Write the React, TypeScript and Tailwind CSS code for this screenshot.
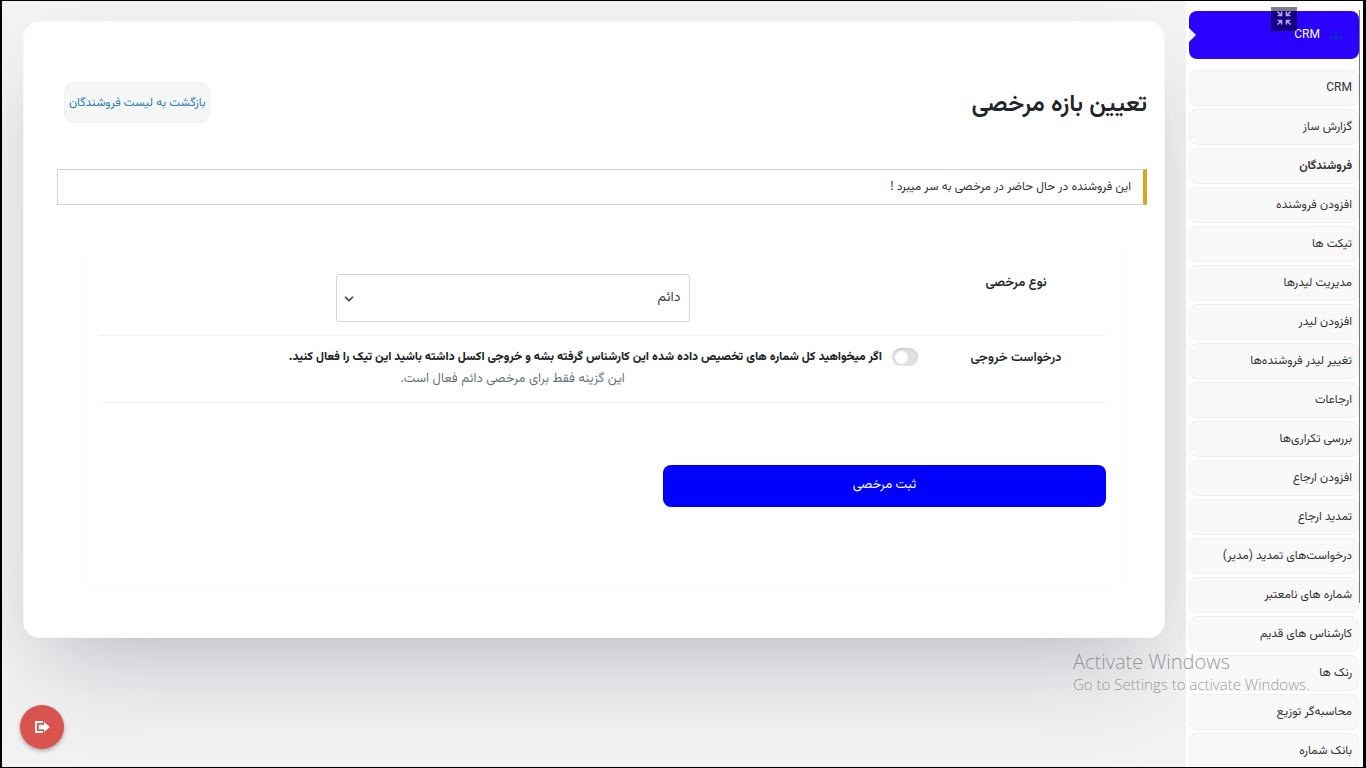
import { useState } from "react";
import { ChevronDown } from "lucide-react";
import clsx from "clsx";

const menuItems = [
  { label: "CRM" },
  { label: "گزارش ساز" },
  { label: "فروشندگان", active: true },
  { label: "افزودن فروشنده" },
  { label: "تیکت ها" },
  { label: "مدیریت لیدرها" },
  { label: "افزودن لیدر" },
  { label: "تغییر لیدر فروشنده‌ها" },
  { label: "ارجاعات" },
  { label: "بررسی تکراری‌ها" },
  { label: "افزودن ارجاع" },
  { label: "تمدید ارجاع" },
  { label: "درخواست‌های تمدید (مدیر)" },
  { label: "شماره های نامعتبر" },
  { label: "کارشناس های قدیم" },
  { label: "رنک ها" },
  { label: "محاسبه‌گر توزیع" },
  { label: "بانک شماره" },
];

function UsersIcon() {
  return (
    <svg width="14" height="14" viewBox="0 0 14 14" fill="currentColor">
      <circle cx="7" cy="5" r="2" />
      <circle cx="4" cy="2" r="1.4" />
      <circle cx="10" cy="2" r="1.4" />
      <circle cx="1.6" cy="4.6" r="1.3" />
      <circle cx="12.4" cy="4.6" r="1.3" />
      <path d="M3.8 8.5Q7 6 10.2 8.5L9.5 13.5h-5zM.3 7.2Q2 5.8 3.4 7.4L3.6 12H1.3zM13.7 7.2Q12 5.8 10.6 7.4l-.2 4.6h2.3z" />
    </svg>
  );
}

function CompressIcon() {
  return (
    <svg width="16" height="16" viewBox="0 0 16 16" fill="none" stroke="currentColor" strokeWidth="1.5">
      <path d="M1.5 1.5 5.2 5.2M1.6 5.6h4V1.6M14.5 1.5l-3.7 3.7M14.4 5.6h-4V1.6M1.5 14.5l3.7-3.7M1.6 10.4h4v4M14.5 14.5l-3.7-3.7M14.4 10.4h-4v4" />
    </svg>
  );
}

function ExitIcon() {
  return (
    <svg width="15" height="12" viewBox="0 0 15 12">
      <path d="M8 1H1v10h7" fill="none" stroke="white" strokeWidth="1.8" />
      <path d="M3.8 3.8h5.2V1L15 6 9 11V8.2H3.8z" fill="white" />
    </svg>
  );
}

function Sidebar() {
  return (
    <aside className="relative w-[177px] shrink-0 overflow-hidden bg-white pt-[10px] pr-1 pl-[3px]">
      <button
        type="button"
        className="relative flex h-12 w-full items-center gap-[9px] rounded-lg bg-[#2a00ff] pr-4 pb-px text-xs text-white"
      >
        <span className="text-[#1f1ae0]">
          <UsersIcon />
        </span>
        CRM
        <span className="absolute top-[17px] left-0 border-y-[7px] border-l-[7px] border-y-transparent border-l-[#f3f3f3]" />
      </button>
      <nav className="mt-[11px] flex flex-col gap-[3px]">
        {menuItems.map((item) => (
          <a
            key={item.label}
            href="#"
            className={clsx(
              "flex h-9 shrink-0 items-center rounded-lg border border-[#f0f0f0] bg-[#f9f9f9] pr-[6px] pb-px text-xs whitespace-nowrap text-[#333]",
              item.active && "font-bold"
            )}
          >
            {item.label}
          </a>
        ))}
      </nav>
      {/* scroll thumb */}
      <div className="absolute top-[9px] right-[3px] h-[593px] w-px bg-[#777]" />
    </aside>
  );
}

function LeaveForm() {
  const [leaveType, setLeaveType] = useState("permanent");
  const [exportRequested, setExportRequested] = useState(false);

  return (
    <form
      className="mt-9 mr-[26px] ml-[27px] rounded-xl border border-t-0 border-[#fafafa] px-[14px] pt-[20px] pb-20 text-[#212529]"
      onSubmit={(e) => e.preventDefault()}
    >
      <div className="flex border-b border-[#f0f0f0] pt-[13px] pb-[13px]">
        <label htmlFor="leaveType" className="w-[180px] shrink-0 text-center text-[13px] leading-[18px] font-semibold">
          نوع مرخصی
        </label>
        <div className="flex flex-1 justify-center">
          <div className="relative w-[354px]">
            <select
              id="leaveType"
              value={leaveType}
              onChange={(e) => setLeaveType(e.target.value)}
              className="h-12 w-full appearance-none rounded-[3px] border border-[#d5d5d5] bg-white pr-2 pl-8 text-sm text-[#444]"
            >
              <option value="permanent">دائم</option>
              <option value="temporary">موقت</option>
            </select>
            <ChevronDown
              size={14}
              strokeWidth={3}
              className="pointer-events-none absolute top-[18px] left-[6px] text-[#444]"
            />
          </div>
        </div>
      </div>

      <div className="flex border-b border-[#f0f0f0] pt-3 pb-[14px]">
        <label
          htmlFor="exportRequest"
          className="w-[180px] shrink-0 text-center text-[13px] leading-5 font-semibold"
        >
          درخواست خروجی
        </label>
        <div className="flex-1 pr-2">
          <label className="flex items-center gap-[10px] text-xs leading-[18px] font-extrabold whitespace-nowrap">
            <input
              type="checkbox"
              id="exportRequest"
              checked={exportRequested}
              onChange={(e) => setExportRequested(e.target.checked)}
              className="h-[18px] w-[26px] shrink-0 appearance-none rounded-full bg-[#dfe0e5] p-[3px] shadow-[inset_0_1px_2px_rgba(0,0,0,0.12)] before:mr-[7px] before:block before:size-[13px] before:rounded-full before:bg-white checked:bg-blue-600 checked:before:mr-0"
            />
            اگر میخواهید کل شماره های تخصیص داده شده این کارشناس گرفته بشه و خروجی اکسل داشته باشید این تیک را فعال کنید.
          </label>
          <p className="mt-1 pl-2 text-center text-[13px] leading-[18px] text-[#6c757d]">
            این گزینه فقط برای مرخصی دائم فعال است.
          </p>
        </div>
      </div>

      <button
        type="submit"
        className="mt-[62px] block h-[42px] w-[44%] rounded-lg bg-[#0000ff] text-[13px] text-white"
      >
        ثبت مرخصی
      </button>
    </form>
  );
}

export default function App() {
  return (
    <div
      dir="rtl"
      className="relative flex h-screen overflow-hidden border-t border-r-[3px] border-b border-l-2 border-black bg-[#f3f3f3] font-['Vazirmatn','Roboto','Noto_Sans',sans-serif]"
    >
      <Sidebar />

      <main className="min-w-0 flex-1 overflow-hidden pt-5 pr-[21px] pl-[21px]">
        <section className="rounded-2xl border border-[#f8f8f8] bg-white pt-[60px] pr-[17px] pb-[49px] pl-[33px] shadow-[0_50px_100px_-20px_rgba(50,50,93,0.2),0_30px_60px_-30px_rgba(0,0,0,0.1)]">
          <header className="flex items-center justify-between pl-[7px]">
            <h1 className="pt-1 text-2xl font-semibold text-[#212529]">تعیین بازه مرخصی</h1>
            <a
              href="#"
              className="flex h-[41px] items-center rounded-[10px] border border-[#eef1f1] bg-[#f5f7f7] px-1 text-xs text-[#337ab7]"
            >
              بازگشت به لیست فروشندگان
            </a>
          </header>

          <div className="mt-[46px] flex h-9 items-center border border-r-4 border-[#d3d3d3] border-r-[#daa520] pr-3 text-xs text-[#333]">
            این فروشنده در حال حاضر در مرخصی به سر میبرد !
          </div>

          <LeaveForm />
        </section>
      </main>

      <button
        type="button"
        aria-label="تمام صفحه"
        className="absolute top-[6px] right-[66px] flex h-6 w-[26px] items-center justify-center bg-black/50 pb-[2px] text-[#b9a5ff]"
      >
        <CompressIcon />
      </button>

      <button
        type="button"
        aria-label="خروج"
        className="absolute bottom-[18px] left-[18px] flex size-11 items-center justify-center rounded-full bg-[#d9534f] shadow-[0_2px_4px_rgba(0,0,0,0.3)]"
      >
        <ExitIcon />
      </button>

      <div
        dir="ltr"
        className="pointer-events-none absolute right-[54px] bottom-[73px] w-[236px] font-['Open_Sans',sans-serif] font-light whitespace-nowrap text-[#808080]/80"
      >
        <p className="text-xl leading-6">Activate Windows</p>
        <p className="text-[15px] leading-5">Go to Settings to activate Windows.</p>
      </div>
    </div>
  );
}
